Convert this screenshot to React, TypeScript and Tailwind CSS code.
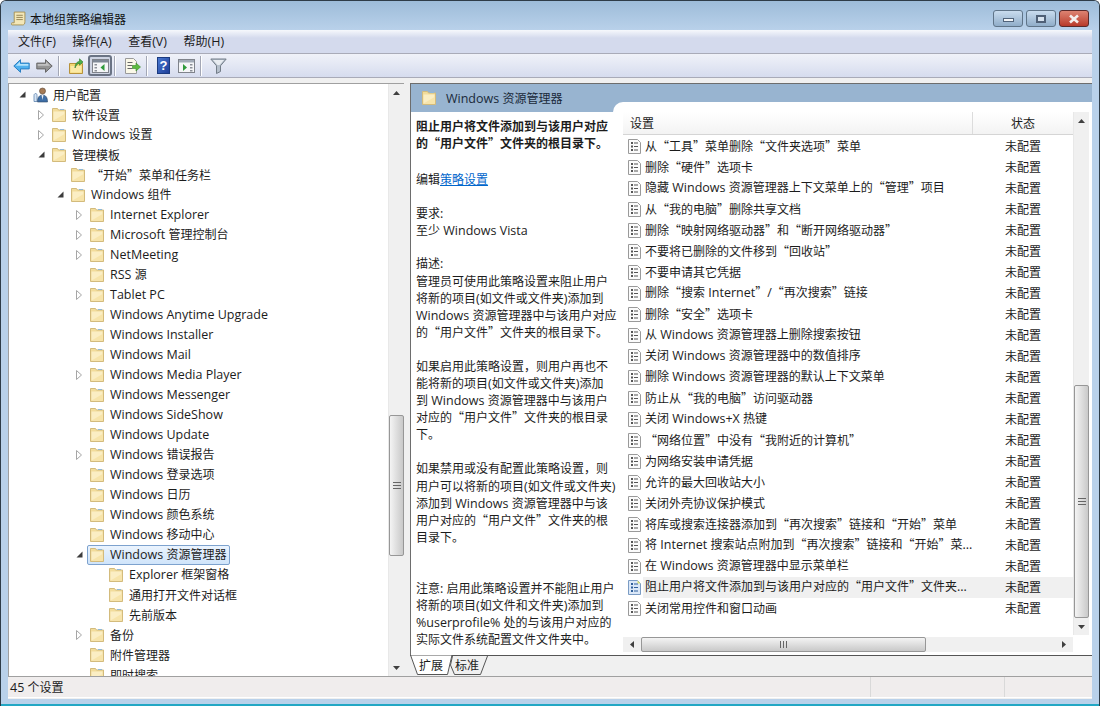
import type { ReactNode } from "react";

type TreeItem = {
  label: string;
  level: number;
  arrow?: "open" | "closed";
  selected?: boolean;
};

const tree: TreeItem[] = [
  { label: "软件设置", level: 1, arrow: "closed" },
  { label: "Windows 设置", level: 1, arrow: "closed" },
  { label: "管理模板", level: 1, arrow: "open" },
  { label: "“开始”菜单和任务栏", level: 2 },
  { label: "Windows 组件", level: 2, arrow: "open" },
  { label: "Internet Explorer", level: 3, arrow: "closed" },
  { label: "Microsoft 管理控制台", level: 3, arrow: "closed" },
  { label: "NetMeeting", level: 3, arrow: "closed" },
  { label: "RSS 源", level: 3 },
  { label: "Tablet PC", level: 3, arrow: "closed" },
  { label: "Windows Anytime Upgrade", level: 3 },
  { label: "Windows Installer", level: 3 },
  { label: "Windows Mail", level: 3 },
  { label: "Windows Media Player", level: 3, arrow: "closed" },
  { label: "Windows Messenger", level: 3 },
  { label: "Windows SideShow", level: 3 },
  { label: "Windows Update", level: 3 },
  { label: "Windows 错误报告", level: 3, arrow: "closed" },
  { label: "Windows 登录选项", level: 3 },
  { label: "Windows 日历", level: 3 },
  { label: "Windows 颜色系统", level: 3 },
  { label: "Windows 移动中心", level: 3 },
  { label: "Windows 资源管理器", level: 3, arrow: "open", selected: true },
  { label: "Explorer 框架窗格", level: 4 },
  { label: "通用打开文件对话框", level: 4 },
  { label: "先前版本", level: 4 },
  { label: "备份", level: 3, arrow: "closed" },
  { label: "附件管理器", level: 3 },
  { label: "即时搜索", level: 3 },
];

const settings = [
  "从“工具”菜单删除“文件夹选项”菜单",
  "删除“硬件”选项卡",
  "隐藏 Windows 资源管理器上下文菜单上的“管理”项目",
  "从“我的电脑”删除共享文档",
  "删除“映射网络驱动器”和“断开网络驱动器”",
  "不要将已删除的文件移到“回收站”",
  "不要申请其它凭据",
  "删除“搜索 Internet”/“再次搜索”链接",
  "删除“安全”选项卡",
  "从 Windows 资源管理器上删除搜索按钮",
  "关闭 Windows 资源管理器中的数值排序",
  "删除 Windows 资源管理器的默认上下文菜单",
  "防止从“我的电脑”访问驱动器",
  "关闭 Windows+X 热键",
  "“网络位置”中没有“我附近的计算机”",
  "为网络安装申请凭据",
  "允许的最大回收站大小",
  "关闭外壳协议保护模式",
  "将库或搜索连接器添加到“再次搜索”链接和“开始”菜单",
  "将 Internet 搜索站点附加到“再次搜索”链接和“开始”菜...",
  "在 Windows 资源管理器中显示菜单栏",
  "阻止用户将文件添加到与该用户对应的“用户文件”文件夹...",
  "关闭常用控件和窗口动画",
];

const levelPad = ["pl-[8px]", "pl-[27px]", "pl-[46px]", "pl-[65px]", "pl-[84px]"];

// latin runs get their own font so the curly quotes stay full width in the CJK face
function T({ children }: { children: string }) {
  const parts = children.split(/([\x20-\x7e]+)/).filter(Boolean);
  return (
    <>
      {parts.map((p, i) =>
        /^[\x20-\x7e]+$/.test(p) ? (
          <span key={i} className="font-['Open_Sans',sans-serif] text-[12.5px]">
            {p}
          </span>
        ) : (
          <span key={i}>{p}</span>
        ),
      )}
    </>
  );
}

// one line of the description pane, fixed height so mixed fonts don't stretch it
function L({ children }: { children: string }) {
  return (
    <div className="h-[17.1px] leading-[17.1px]">
      <T>{children}</T>
    </div>
  );
}

function Folder() {
  return (
    <svg width="16" height="15" viewBox="0 0 16 15" className="shrink-0">
      <path d="M1.500 14.500V1.500h5l1 1.500h7v11.500z" fill="#f2dc9b" stroke="#d3bb7c" />
      <rect x="9" y="2" width="4" height="1" fill="#8fb8d8" />
      <path d="M2.500 4.500h11v9h-11z" fill="#fbeec4" />
      <path d="M2.500 13.500h11V7z" fill="#f7e4aa" />
    </svg>
  );
}

function Arrow({ kind }: { kind?: "open" | "closed" }) {
  return (
    <span className="w-[10px] h-[12px] flex items-center justify-center shrink-0">
      {kind === "open" && (
        <svg width="7" height="7" viewBox="0 0 7 7">
          <path d="M6.500 0.500v6h-6z" fill="#3c3c3c" />
        </svg>
      )}
      {kind === "closed" && (
        <svg width="6" height="10" viewBox="0 0 6 10">
          <path d="M0.500 0.500l5 4.500-5 4.500z" fill="#fff" stroke="#a6a6a6" />
        </svg>
      )}
    </span>
  );
}

function UserIcon() {
  return (
    <svg width="16" height="16" viewBox="0 0 16 16" className="shrink-0">
      <path d="M1 8.500c0-2 1.500-2 2-2s1 1 1 2v6H1z" fill="#d9e6f5" stroke="#5e83ad" strokeWidth="0.8" />
      <circle cx="9.500" cy="4" r="3" fill="#a57a55" stroke="#5a4634" strokeWidth="0.6" />
      <path d="M4.500 15c0-5 2-7 5-7s5 2 5 7z" fill="#3e6ea6" stroke="#2c4666" strokeWidth="0.6" />
      <path d="M8.500 8h2l-1 5z" fill="#e9eef5" />
    </svg>
  );
}

function PolicyIcon({ active }: { active?: boolean }) {
  return (
    <svg width="13" height="15" viewBox="0 0 13 15" className="shrink-0">
      <path
        d="M0.500 0.500h9l3 3v11h-12z"
        fill={active ? "#dbe8f8" : "#fbfbfb"}
        stroke={active ? "#7b9cc4" : "#9a9a9a"}
      />
      {active && <path d="M9.500 0.500l3 3h-3z" fill="#e5e56a" />}
      <g fill={active ? "#2f5f9a" : "#555"}>
        <rect x="3" y="3" width="2" height="2" />
        <rect x="3" y="6.500" width="2" height="2" />
        <rect x="3" y="10" width="2" height="2" />
        <rect x="6" y="3.500" width="4" height="1" />
        <rect x="6" y="7" width="4" height="1" />
        <rect x="6" y="10.500" width="4" height="1" />
      </g>
    </svg>
  );
}

function Sep() {
  return <span className="block w-px h-[20px] bg-[#a3a7b5] border-r border-white box-content shrink-0" />;
}

function ConsolePane({ flip, pressed }: { flip?: boolean; pressed?: boolean }) {
  return (
    <svg width="17" height="14" viewBox="0 0 17 14" className="shrink-0">
      <rect x="0.500" y="0.500" width="16" height="13" fill="#f5f6f8" stroke="#7f838b" />
      <rect x="1" y="1" width="15" height="2.500" fill={pressed ? "#7e8896" : "#a2abb8"} />
      <g fill="#8b8f98">
        <rect x={flip ? 12 : 2.5} y="5" width="2.500" height="1.500" />
        <rect x={flip ? 12 : 2.5} y="8" width="2.500" height="1.500" />
        <rect x={flip ? 12 : 2.5} y="11" width="2.500" height="1.500" />
      </g>
      <path d={flip ? "M5 5l4 3.500-4 3.500z" : "M12.500 5l-4 3.500 4 3.500z"} fill="#2f9a3c" />
    </svg>
  );
}

function Toolbar() {
  return (
    <div className="h-[24px] shrink-0 flex items-center border-b border-[#a9abb8] bg-gradient-to-b from-[#f0f2f9] to-[#d6dcee] pl-[5px]">
      <svg width="17" height="14" viewBox="0 0 17 14" className="shrink-0">
        <path d="M7.500 0.700L0.800 7l6.700 6.300V9.900h8.700V4.100H7.500z" fill="#4fb0ee" stroke="#2a7ec2" />
        <path d="M7 2.800L2.800 6.800H15.300V5H7z" fill="#b4e2fb" />
      </svg>
      <svg width="17" height="14" viewBox="0 0 17 14" className="shrink-0 ml-[6px]">
        <path d="M9.500 0.700L16.200 7l-6.700 6.300V9.900H0.800V4.100h8.700z" fill="#949494" stroke="#666" />
        <path d="M10 2.800L14.200 6.800H1.700V5H10z" fill="#c2c2c2" />
      </svg>
      <span className="ml-[5px]">
        <Sep />
      </span>
      <svg width="15" height="16" viewBox="0 0 15 16" className="shrink-0 ml-[9px]">
        <path d="M0.500 5.500h13v10h-13z" fill="#f3d774" stroke="#b7923c" />
        <path d="M1.500 8h11v6.500h-11z" fill="#fbe9a5" />
        <path d="M6 10c0-4 2-6.500 4.500-6.500V0.800L14 4l-3.500 3.200V5.300C8.500 5.300 7 7.500 6 10z" fill="#50b04a" stroke="#2d7a2b" strokeWidth="0.6" />
      </svg>
      <span className="ml-[4px] w-[24px] h-[21px] rounded-[3px] border-2 border-[#6a7384] bg-[#cdd3e2] flex items-center justify-center shrink-0">
        <ConsolePane pressed />
      </span>
      <span className="ml-[2px]">
        <Sep />
      </span>
      <svg width="17" height="16" viewBox="0 0 17 16" className="shrink-0 ml-[8px]">
        <path d="M1.500 0.500h8l3 3v12h-11z" fill="#faf8e8" stroke="#9a9a9a" />
        <g fill="#666">
          <rect x="3.500" y="4" width="5" height="1" />
          <rect x="3.500" y="7" width="5" height="1" />
          <rect x="3.500" y="10" width="5" height="1" />
        </g>
        <path d="M8.500 7.500h3.500V5l4.500 4-4.500 4v-2.500H8.500z" fill="#5cbb3f" stroke="#3a8a2a" strokeWidth="0.6" />
      </svg>
      <span className="ml-[5px]">
        <Sep />
      </span>
      <span className="ml-[9px] w-[13px] h-[17px] bg-gradient-to-br from-[#4a78d0] to-[#1f3f9a] border border-[#1a3a80] text-white font-bold text-[13px] leading-[15px] text-center shrink-0 font-['Liberation_Sans',sans-serif]">
        ?
      </span>
      <span className="ml-[8px]">
        <ConsolePane flip />
      </span>
      <span className="ml-[5px]">
        <Sep />
      </span>
      <svg width="17" height="16" viewBox="0 0 17 16" className="shrink-0 ml-[8px]">
        <path d="M0.800 1h15.400L10.500 7.800v5.700l-4 2V7.800z" fill="#b6c0cc" stroke="#737d88" />
        <path d="M3 2h11L9.500 7H7.500z" fill="#e8ecf1" />
      </svg>
    </div>
  );
}

function VScroll({ before, thumb }: { before: string; thumb: string }) {
  return (
    <div className="w-[16px] shrink-0 bg-[#f0f0f0] flex flex-col border-l border-[#e8e8e8]">
      <div className="h-[17px] shrink-0 flex items-center justify-center">
        <svg width="7" height="4" viewBox="0 0 7 4">
          <path d="M3.500 0L7 4H0z" fill="#404040" />
        </svg>
      </div>
      <div className={`${before} shrink-0`} />
      <div className={`${thumb} shrink-0 rounded-[2px] border border-[#979797] bg-gradient-to-r from-[#f4f4f4] to-[#c9c9c9] flex items-center justify-center`}>
        <svg width="8" height="7" viewBox="0 0 8 7">
          <path d="M0 0.500h8M0 3.500h8M0 6.500h8" stroke="#666" />
        </svg>
      </div>
      <div className="flex-1" />
      <div className="h-[17px] shrink-0 flex items-center justify-center">
        <svg width="7" height="4" viewBox="0 0 7 4">
          <path d="M3.500 4L7 0H0z" fill="#404040" />
        </svg>
      </div>
    </div>
  );
}

function TreePane() {
  return (
    <div className="w-[396px] shrink-0 flex border-t border-l border-[#a0a0a0] bg-white">
      <div className="flex-1 overflow-hidden pt-[0.5px]">
        <div className="h-[20px] flex items-center pl-[8px]">
          <Arrow kind="open" />
          <span className="ml-[6px]">
            <UserIcon />
          </span>
          <span className="ml-[4px]">用户配置</span>
        </div>
        {tree.map((item) => (
          <div key={item.label} className={`h-[20px] flex items-center ${levelPad[item.level]}`}>
            <Arrow kind={item.arrow} />
            {item.selected ? (
              <span className="flex items-center h-[20px] ml-[3px] pl-[1px] pr-[3px] gap-[5px] border border-[#7da2ce] rounded-[2px] bg-gradient-to-b from-[#ebf4fe] to-[#cfe4fa]">
                <Folder />
                <span>
                  <T>{item.label}</T>
                </span>
              </span>
            ) : (
              <>
                <span className="ml-[5px]">
                  <Folder />
                </span>
                <span className="ml-[5px]">
                  <T>{item.label}</T>
                </span>
              </>
            )}
          </div>
        ))}
      </div>
      <VScroll before="h-[314px]" thumb="h-[141px]" />
    </div>
  );
}

function Description() {
  return (
    <div className="w-[212px] shrink-0 overflow-hidden pl-[5px] whitespace-nowrap">
      <div className="font-bold mt-[5px]">
        <L>阻止用户将文件添加到与该用户对应</L>
        <L>的“用户文件”文件夹的根目录下。</L>
      </div>
      <div className="mt-[19px] h-[17.1px] leading-[17.1px]">
        编辑
        <span className="text-[#0066cc] underline">策略设置</span>
      </div>
      <div className="mt-[17px]">
        <L>要求:</L>
        <L>至少 Windows Vista</L>
      </div>
      <div className="mt-[16px]">
        <L>描述:</L>
        <L>管理员可使用此策略设置来阻止用户</L>
        <L>将新的项目(如文件或文件夹)添加到</L>
        <L>Windows 资源管理器中与该用户对应</L>
        <L>的“用户文件”文件夹的根目录下。</L>
      </div>
      <div className="mt-[17px]">
        <L>如果启用此策略设置，则用户再也不</L>
        <L>能将新的项目(如文件或文件夹)添加</L>
        <L>到 Windows 资源管理器中与该用户</L>
        <L>对应的“用户文件”文件夹的根目录</L>
        <L>下。</L>
      </div>
      <div className="mt-[17px]">
        <L>如果禁用或没有配置此策略设置，则</L>
        <L>用户可以将新的项目(如文件或文件夹)</L>
        <L>添加到 Windows 资源管理器中与该</L>
        <L>用户对应的“用户文件”文件夹的根</L>
        <L>目录下。</L>
      </div>
      <div className="mt-[34px]">
        <L>注意: 启用此策略设置并不能阻止用户</L>
        <L>将新的项目(如文件和文件夹)添加到</L>
        <L>%userprofile% 处的与该用户对应的</L>
        <L>实际文件系统配置文件文件夹中。</L>
      </div>
    </div>
  );
}

function SettingsList() {
  return (
    <div className="flex-1 flex flex-col min-w-0">
      <div className="flex-1 flex min-h-0">
        <div className="w-[450px] shrink-0 flex flex-col">
          <div className="h-[23px] shrink-0 mb-[0.5px] flex border-b border-[#d5d5d5] bg-gradient-to-b from-white to-[#f3f3f3]">
            <div className="w-[350px] pl-[7px] leading-[22px] border-r border-[#dcdcdc]">设置</div>
            <div className="flex-1 pl-[38px] leading-[22px]">状态</div>
          </div>
          {settings.map((s, i) => {
            const active = i === 21;
            return (
              <div key={s} className="h-[21px] shrink-0 flex items-center pl-[5px]">
                <PolicyIcon active={active} />
                <div className={`ml-[2px] flex-1 h-[21px] pl-[2px] flex items-center ${active ? "bg-[#f0f0f0]" : ""}`}>
                  <span className="flex-1 whitespace-nowrap">
                    <T>{s}</T>
                  </span>
                  <span className="w-[68px] shrink-0">未配置</span>
                </div>
              </div>
            );
          })}
        </div>
        <VScroll before="h-[256px]" thumb="h-[233px]" />
      </div>
      <div className="h-[15px] shrink-0 mt-[2px] mb-[3px] w-[450px] bg-[#f0f0f0] flex items-center">
        <div className="w-[18px] flex justify-center shrink-0">
          <svg width="4" height="7" viewBox="0 0 4 7">
            <path d="M0 3.500L4 0v7z" fill="#404040" />
          </svg>
        </div>
        <div className="w-[285px] h-[15px] rounded-[2px] border border-[#979797] bg-gradient-to-b from-[#f4f4f4] to-[#c9c9c9] flex items-center justify-center">
          <svg width="7" height="7" viewBox="0 0 7 7">
            <path d="M0.500 0v7M3.500 0v7M6.500 0v7" stroke="#666" />
          </svg>
        </div>
        <div className="flex-1" />
        <div className="w-[18px] flex justify-center shrink-0">
          <svg width="4" height="7" viewBox="0 0 4 7">
            <path d="M4 3.500L0 0v7z" fill="#404040" />
          </svg>
        </div>
      </div>
    </div>
  );
}

function Tab({
  children,
  box,
  d,
  viewBox,
  fill,
}: {
  children: ReactNode;
  box: string;
  d: string;
  viewBox: string;
  fill: string;
}) {
  return (
    <div className={`relative h-[21px] -mt-[1px] flex items-center justify-center ${box}`}>
      <svg className="absolute inset-0 w-full h-full" viewBox={viewBox}>
        <path d={d} fill={fill} stroke="#555" />
      </svg>
      <span className="relative">{children}</span>
    </div>
  );
}

function RightPane() {
  return (
    <div className="flex-1 flex flex-col ml-[6px] border-t border-l border-[#6d6d6d] min-w-0">
      <div className="h-[28px] shrink-0 flex bg-[#98b4d0]">
        <div className="w-[202px] flex items-start pl-[10px] pt-[6px] gap-[9px] shrink-0">
          <Folder />
          <span className="text-[#1a2a3a] leading-[16px]">
            <T>Windows 资源管理器</T>
          </span>
        </div>
        <div className="flex-1 self-end h-[10px] bg-white rounded-tl-[12px]" />
      </div>
      <div className="flex-1 flex bg-white min-h-0">
        <Description />
        <SettingsList />
      </div>
      <div className="h-[21px] shrink-0 border-t border-[#555] bg-[#f0f0f0] flex pl-0 -ml-px">
        <Tab box="w-[42px] pb-[2px] z-10" viewBox="0 0 42 21" d="M0.500 0l7 19.500h30L42 0z" fill="#fff">
          扩展
        </Tab>
        <Tab box="w-[38px] -ml-[2px] pr-[4px] pb-[2px]" viewBox="0 0 38 21" d="M2.500 1L0.500 10l4 9.500h26L37.500 1" fill="#f0f0f0">
          标准
        </Tab>
      </div>
    </div>
  );
}

export default function App() {
  return (
    <div className="w-[1100px] h-[706px] overflow-hidden bg-[#b9d1ea] text-[12px] text-[#1c1c1c] font-['Noto_Sans_CJK_SC',sans-serif] rounded-t-[6px] border border-b-0 border-[#2e3c48] flex flex-col">
      {/* Title bar */}
      <div className="h-[29px] shrink-0 flex items-start bg-gradient-to-b from-[#9dbcd9] to-[#b9d1ea] pl-[10px] pr-[10px] pt-[9px]">
        <svg width="15" height="15" viewBox="0 0 14 14" className="shrink-0 mt-[1px]">
          <path d="M3 1h10v9c0 2-1 3-2 3H1c-1 0-1-2 0-2h2z" fill="#f3e7b8" stroke="#a18a4a" strokeWidth="0.8" />
          <path d="M5 4h6M5 6h6M5 8h6" stroke="#8a7a4a" strokeWidth="0.8" />
        </svg>
        <span className="ml-[4px] h-[17px] leading-[17px] text-[#111]">本地组策略编辑器</span>
        <div className="flex-1" />
        <div className="flex gap-[3px]">
          <div className="w-[30px] h-[17px] rounded-[3px] border border-[#5f7488] bg-gradient-to-b from-[#c9dcee] to-[#90adc9] flex items-center justify-center">
            <span className="w-[11px] h-[4px] mt-[3px] bg-[#f2f5f8] border border-[#50637a]" />
          </div>
          <div className="w-[30px] h-[17px] rounded-[3px] border border-[#5f7488] bg-gradient-to-b from-[#c9dcee] to-[#90adc9] flex items-center justify-center">
            <span className="w-[10px] h-[8px] border-2 border-[#4f6076] bg-[#d6e2ee]" />
          </div>
          <div className="w-[30px] h-[17px] rounded-[3px] border border-[#5a2a2a] bg-gradient-to-b from-[#dd8372] to-[#b8392a] flex items-center justify-center">
            <svg width="12" height="10" viewBox="0 0 12 10">
              <path d="M2 1.500l8 7M10 1.500l-8 7" stroke="#f4efee" strokeWidth="2.600" />
            </svg>
          </div>
        </div>
      </div>

      <div className="h-[669px] shrink-0 mx-[7px] flex flex-col bg-[#f0f0f0]">
        {/* Menu bar */}
        <div className="h-[24px] shrink-0 flex items-center gap-[16.5px] pl-[10px] border-b border-[#a9abb8] bg-[linear-gradient(#f6f8fc,#d4daed_35%,#d4daed)] text-[#1c1c1c]">
          <span><T>文件(F)</T></span>
          <span><T>操作(A)</T></span>
          <span><T>查看(V)</T></span>
          <span><T>帮助(H)</T></span>
        </div>
        <Toolbar />
        <div className="h-[5px] shrink-0" />
        <div className="h-[593px] shrink-0 flex">
          <TreePane />
          <RightPane />
        </div>
        {/* Status bar */}
        <div className="h-[21px] shrink-0 flex border-t border-[#a0a0a0] bg-[#f0eded] pl-[2px] leading-[20px]">
          <div className="w-[861px] border-r border-[#d9d9d9]">
            <T>45 个设置</T>
          </div>
          <div className="w-[134px] border-r border-[#d9d9d9]" />
        </div>
        <div className="h-px bg-white shrink-0" />
      </div>
      <div className="flex-1" />
      <div className="h-[2px] shrink-0 bg-[#23a7c4]" />
    </div>
  );
}
